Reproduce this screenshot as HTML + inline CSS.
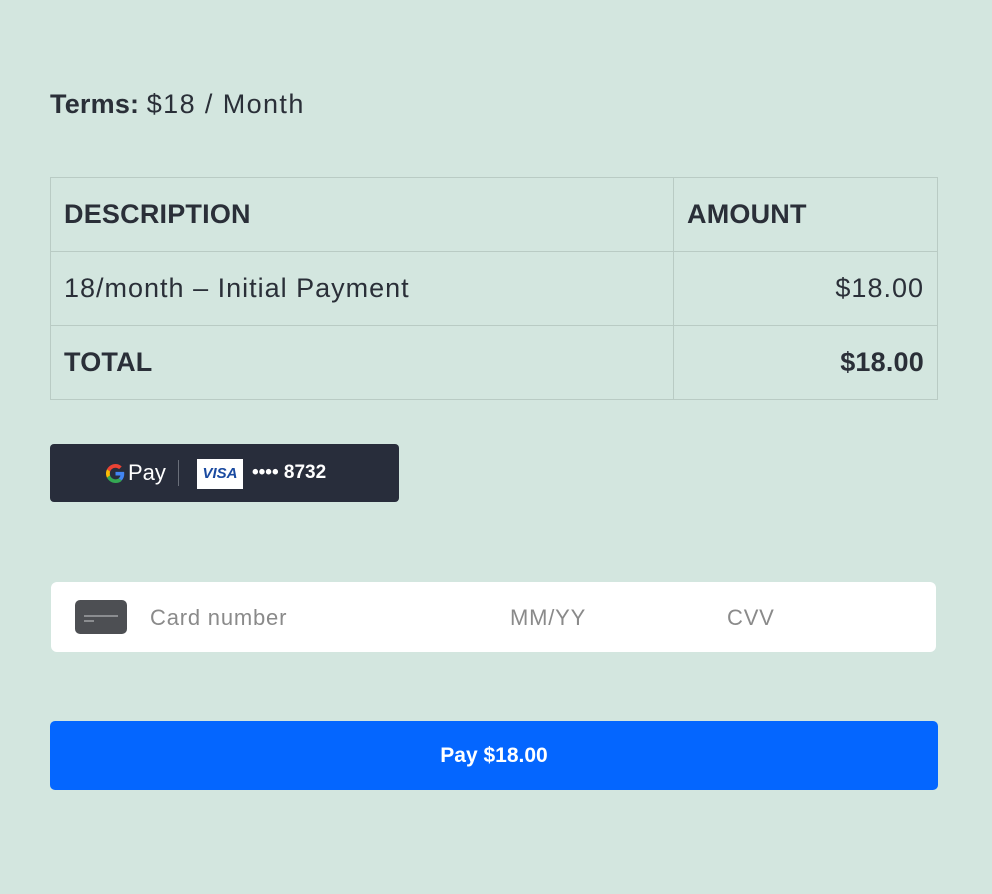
<!DOCTYPE html>
<html><head><meta charset="utf-8"><style>
html,body{margin:0;padding:0}
body{width:992px;height:894px;background:#d3e6df;font-family:"Liberation Sans",sans-serif;color:#2a2f38;position:relative;overflow:hidden}
.terms{position:absolute;left:50px;top:89px;font-size:27px}
.sp{letter-spacing:1.4px}
table{position:absolute;left:50px;top:177px;width:888px;border-collapse:collapse;font-size:27px}
td{border:1px solid #b9cbc4;height:73px;padding:0 13px}
.c1{width:596px}
.r{text-align:right}
.n{letter-spacing:1px}
b{font-weight:bold;letter-spacing:0.2px}
.gpay{position:absolute;left:50px;top:444px;width:349px;height:58px;background:#282d3b;border-radius:4px;color:#fff}
.card{position:absolute;left:51px;top:582px;width:885px;height:70px;background:#fff;border-radius:6px;font-size:22px;color:#8a8a8a;letter-spacing:0.8px}
.pay{position:absolute;left:50px;top:721px;width:888px;height:69px;background:#0466ff;border-radius:5px;color:#fff;font-size:21px;font-weight:bold;text-align:center;line-height:69px}
</style></head><body>
<div class="terms"><b>Terms:</b> <span class="sp">$18 / Month</span></div>
<table>
<tr><td class="c1"><b>DESCRIPTION</b></td><td><b>AMOUNT</b></td></tr>
<tr><td class="c1 n">18/month – Initial Payment</td><td class="r n">$18.00</td></tr>
<tr><td class="c1"><b>TOTAL</b></td><td class="r"><b>$18.00</b></td></tr>
</table>
<div class="gpay">
<svg style="position:absolute;left:56px;top:20px" width="19" height="19" viewBox="0 0 48 48"><path fill="#EA4335" d="M24 9.5c3.5 0 6.6 1.2 9 3.5l6.7-6.7C35.6 2.4 30.2 0 24 0 14.6 0 6.6 5.4 2.6 13.3l7.8 6C12.3 13.7 17.7 9.5 24 9.5z"/><path fill="#4285F4" d="M46.1 24.5c0-1.6-.1-3.1-.4-4.5H24v9h12.4c-.5 2.900-2.2 5.300-4.6 7l7.5 5.8c4.4-4 6.8-10 6.8-17.3z"/><path fill="#FBBC05" d="M10.4 28.7c-.5-1.4-.8-3-.8-4.7s.3-3.2.8-4.7l-7.8-6C1 16.5 0 20.1 0 24s1 7.5 2.6 10.7l7.8-6z"/><path fill="#34A853" d="M24 48c6.5 0 11.9-2.1 15.9-5.8l-7.5-5.8c-2.1 1.4-4.8 2.3-8.4 2.3-6.3 0-11.7-4.2-13.6-10l-7.8 6C6.6 42.6 14.6 48 24 48z"/></svg>
<span style="position:absolute;left:78px;top:16px;font-size:22px">Pay</span>
<div style="position:absolute;left:128px;top:16px;width:1px;height:26px;background:#6a6f7a"></div>
<div style="position:absolute;left:147px;top:15px;width:46px;height:30px;background:#fff;color:#1a4aa0;font-weight:bold;font-style:italic;font-size:15px;text-align:center;line-height:30px">VISA</div>
<span style="position:absolute;left:202px;top:18px;font-size:19px;font-weight:bold">•••• 8732</span>
</div>
<div class="card">
<div style="position:absolute;left:24px;top:18px;width:52px;height:34px;background:#4d4f53;border-radius:5px"><div style="position:absolute;left:9px;top:15px;width:34px;height:2px;background:#8b8d90"></div><div style="position:absolute;left:9px;top:20px;width:10px;height:2px;background:#8b8d90"></div></div>
<span style="position:absolute;left:99px;top:23px">Card number</span>
<span style="position:absolute;left:459px;top:23px">MM/YY</span>
<span style="position:absolute;left:676px;top:23px">CVV</span>
</div>
<div class="pay">Pay $18.00</div>
</body></html>
